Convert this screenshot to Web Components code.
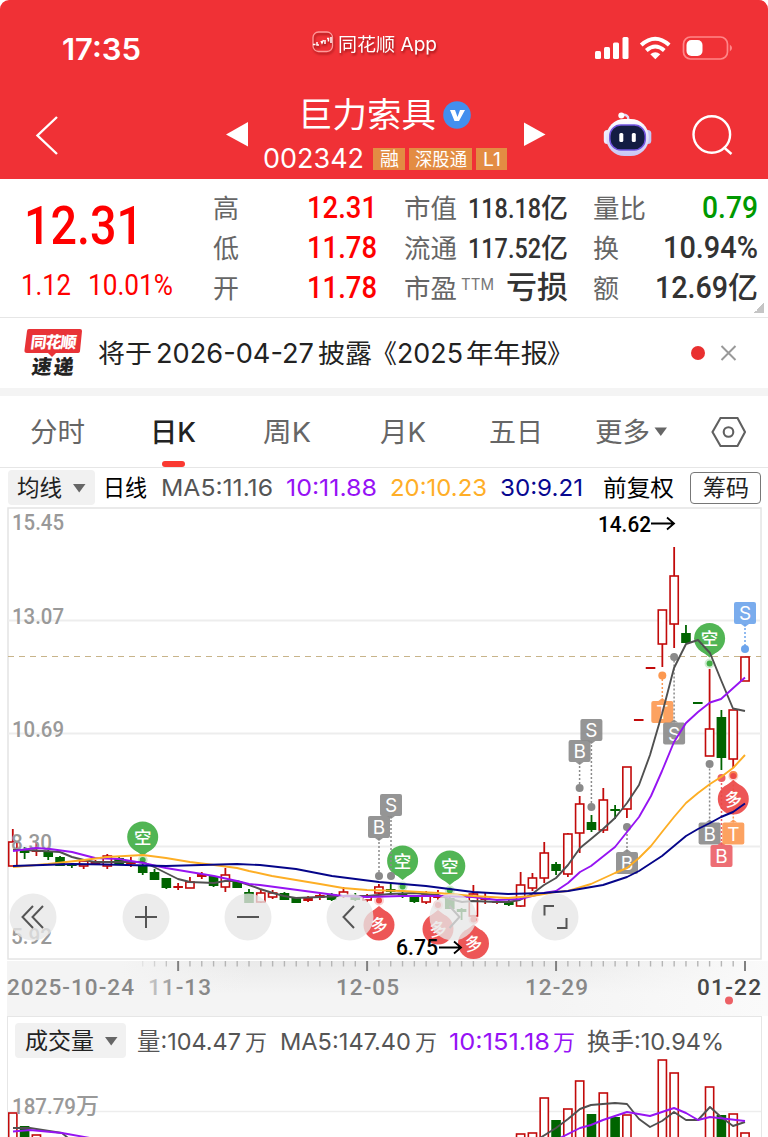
<!DOCTYPE html>
<html lang="zh-CN">
<head>
<meta charset="utf-8">
<title>巨力索具 002342</title>
<style>
    body {
        margin: 0;
        background: #fff;
        font-family: Inter, "Noto Sans CJK SC", sans-serif;
        overflow: hidden;
    }
</style>
</head>
<body>
<stock-page></stock-page>

<script>
// one line of text fitted to a width, the bottom of its box is the baseline
class FitText extends HTMLElement {
    constructor() {
        super();
        this.attachShadow({ mode: 'open' });
    }

    connectedCallback() {
        const w = this.getAttribute('w');
        const size = this.getAttribute('size') || 26;
        const h = Math.round(size * 0.73);
        const family = this.hasAttribute('din') ? "Roboto, 'Noto Sans CJK SC', sans-serif" : "Inter, 'Noto Sans CJK SC', sans-serif";
        this.shadowRoot.innerHTML = `
<style>
    :host { display: block; flex: none; width: ${w}px; height: ${h}px; }
    svg { display: block; overflow: visible; }
    text { fill: currentColor; }
</style>
<svg width="${w}" height="${h}"><text x="0" y="${h}" font-family="${family}" font-size="${size}" font-weight="${this.getAttribute('weight') || 400}" textLength="${w}" lengthAdjust="spacingAndGlyphs">${this.textContent}</text></svg>`;
    }
}
customElements.define('fit-text', FitText);

class StatusBar extends HTMLElement {
    constructor() {
        super();
        this.attachShadow({ mode: 'open' }).innerHTML = `
<style>
    :host { display: flex; height: 60px; align-items: flex-end; color: #fff; }
    .time { margin-left: 62px; }
    .app { display: flex; align-items: flex-end; margin: 0 0 9px 171px; filter: drop-shadow(1px 2px 1px rgba(90,0,0,.55)); }
    .app svg { margin: 0 4px -2px 0; }
    .icons { margin-left: 157px; }
    svg { display: block; }
</style>
<fit-text class="time" w="79" size="30" weight="600">17:35</fit-text>
<div class="app">
    <svg width="22" height="22" fill="none"><rect x="1" y="1" width="19.500" height="19.500" rx="5.500" stroke="#ff9a9a" stroke-width="1.300"/><path d="M1 13.500h2.500M5 11v3h2M9 10l1 2 1.500-3M13 9v4M15 7.500h1.500v3M19 6v6" stroke="#fff" stroke-width="1.500"/></svg>
    <fit-text w="99" size="18.500">同花顺 App</fit-text>
</div>
<svg class="icons" width="140" height="25" fill="#fff">
    <rect x="1" y="16" width="6" height="8" rx="1.500"/><rect x="10" y="12" width="6" height="12" rx="1.500"/><rect x="19" y="7.500" width="6" height="16.500" rx="1.500"/><rect x="28.500" y="2" width="6" height="22" rx="1.500"/>
    <g fill="none" stroke="#fff" stroke-width="4"><path d="M47.200 10q14-12.500 28 0"/><path d="M52.300 15.500q9-8 18 0"/></g>
    <path d="M56.300 19.300q5-4 10 0l-5 5z"/>
    <rect x="89.500" y="2" width="44" height="22" rx="7" fill="none" stroke="#ff8688" stroke-width="1.700"/><rect x="92.500" y="5" width="16" height="16" rx="5"/><path d="M135.800 9.500q4.500 3.500 0 7z" fill="#ff8688"/>
</svg>`;
    }
}
customElements.define('status-bar', StatusBar);

class StockTag extends HTMLElement {
    constructor() {
        super();
        this.attachShadow({ mode: 'open' }).innerHTML = `
<style>
    :host { display: flex; height: 22px; align-items: flex-end; justify-content: center; background: #e38c43; color: #fff; }
    div { margin-bottom: 4px; }
</style>
<div><slot></slot></div>`;
    }
}
customElements.define('stock-tag', StockTag);

class NavBar extends HTMLElement {
    constructor() {
        super();
        this.attachShadow({ mode: 'open' }).innerHTML = `
<style>
    :host { display: flex; height: 119px; color: #fff; }
    svg { display: block; flex: none; }
    .mid { width: 275px; flex: none; }
    .title { display: flex; height: 67px; align-items: flex-end; padding-left: 49px; }
    .title svg { margin: 0 0 -2px 7px; }
    .code { display: flex; height: 43px; align-items: flex-end; padding-left: 14px; gap: 4px; }
    .num { margin: 0 5px 2px 0; }
</style>
<svg width="249" height="119"><path d="M57 57 37.500 75.500 57 94" fill="none" stroke="#fff" stroke-width="2.400"/><path d="M226 74.500 248 62v24.500z" fill="#fff"/></svg>
<div class="mid">
    <div class="title">
        <fit-text w="138" size="34">巨力索具</fit-text>
        <svg width="28" height="28"><circle cx="14" cy="14" r="13.800" fill="#438fee"/><path d="M7 9h5l2.500 7L17 9h5l-6 11h-4.500z" fill="#fff"/></svg>
    </div>
    <div class="code">
        <fit-text class="num" w="101" size="27">002342</fit-text>
        <stock-tag style="width:32px"><fit-text w="19" size="19">融</fit-text></stock-tag>
        <stock-tag style="width:63px"><fit-text w="52" size="18">深股通</fit-text></stock-tag>
        <stock-tag style="width:31px"><fit-text w="18" size="19">L1</fit-text></stock-tag>
    </div>
</div>
<svg width="244" height="119">
    <defs><linearGradient id="head" x2="0" y2="1"><stop stop-color="#fff"/><stop offset="1" stop-color="#c8c6f4"/></linearGradient></defs>
    <path d="M-1 62v24.500L21.500 74.500z" fill="#fff"/>
    <g transform="translate(-.7 0)">
        <path d="M105 59q0-5-7-4" fill="none" stroke="#e0dcf6" stroke-width="2.500"/><circle cx="98" cy="55.500" r="3" fill="#fff"/>
        <rect x="80.500" y="70" width="7" height="14" rx="3.500" fill="#eeecff"/><rect x="121" y="70" width="7" height="14" rx="3.500" fill="#c6c7f5"/>
        <rect x="83" y="59" width="42.500" height="37" rx="18" fill="url(#head)"/>
        <rect x="86.500" y="65" width="35.500" height="25" rx="11" fill="#131d42" stroke="#7355df" stroke-width="1.500"/>
        <rect x="96" y="73" width="4" height="9" rx="1.500" fill="#fff"/><rect x="108.500" y="73" width="4" height="9" rx="1.500" fill="#fff"/>
    </g>
    <g fill="none" stroke="#fff" stroke-width="2.400"><circle cx="187.800" cy="74.500" r="18.300"/><path d="m199.500 87 8 7"/></g>
</svg>`;
    }
}
customElements.define('nav-bar', NavBar);

class QuotePanel extends HTMLElement {
    constructor() {
        super();
        this.attachShadow({ mode: 'open' }).innerHTML = `
<style>
    :host { display: grid; grid-template-columns: 213px 164px 191px 190px; height: 138px; border-bottom: 1px solid #e6e6e6; color: #333; }
    .price { color: #f00; padding: 26px 0 0 24px; }
    .change { display: flex; gap: 17px; margin: 30px 0 0 -3px; }
    .col { display: flex; flex-direction: column; gap: 18px; padding-top: 17px; }
    .cap { padding-left: 27px; }
    .vol { padding-left: 25px; }
    .row { display: flex; height: 22px; align-items: flex-end; }
    .row > :last-child { margin-left: auto; }
    .k { color: #666; }
    .red { color: #f00; }
    .green { color: #090; }
    .val { display: flex; align-items: flex-end; }
    .ttm { color: #777; margin: 0 0 8px 4px; }
    .more { width: 10px; height: 10px; margin: -13px -6px 0 auto; background: linear-gradient(135deg, transparent 50%, #c5c5c5 50%); }
</style>
<div class="price">
    <fit-text din w="119" size="54" weight="550">12.31</fit-text>
    <div class="change"><fit-text din w="50" size="29" weight="450">1.12</fit-text><fit-text din w="85" size="29" weight="450">10.01%</fit-text></div>
</div>
<div class="col">
    <div class="row"><fit-text class="k" w="26">高</fit-text><fit-text class="red" din w="70" size="31" weight="500">12.31</fit-text></div>
    <div class="row"><fit-text class="k" w="26">低</fit-text><fit-text class="red" din w="70" size="31" weight="500">11.78</fit-text></div>
    <div class="row"><fit-text class="k" w="26">开</fit-text><fit-text class="red" din w="70" size="31" weight="500">11.78</fit-text></div>
</div>
<div class="col cap">
    <div class="row"><fit-text class="k" w="53">市值</fit-text><div class="val"><fit-text din w="73" size="27" weight="500">118.18</fit-text><fit-text w="27" size="27" weight="500">亿</fit-text></div></div>
    <div class="row"><fit-text class="k" w="53">流通</fit-text><div class="val"><fit-text din w="73" size="27" weight="500">117.52</fit-text><fit-text w="27" size="27" weight="500">亿</fit-text></div></div>
    <div class="row"><fit-text class="k" w="53">市盈</fit-text><fit-text class="ttm" w="33" size="16">TTM</fit-text><fit-text w="62" size="31" weight="500">亏损</fit-text></div>
</div>
<div class="col vol">
    <div class="row"><fit-text class="k" w="53">量比</fit-text><fit-text class="green" din w="56" size="31" weight="500">0.79</fit-text></div>
    <div class="row"><fit-text class="k" w="26">换</fit-text><fit-text din w="95" size="31" weight="500">10.94%</fit-text></div>
    <div class="row"><fit-text class="k" w="26">额</fit-text><div class="val"><fit-text din w="73" size="31" weight="500">12.69</fit-text><fit-text w="30" size="30" weight="500">亿</fit-text></div></div>
    <div class="more"></div>
</div>`;
    }
}
customElements.define('quote-panel', QuotePanel);

class NewsBar extends HTMLElement {
    constructor() {
        super();
        this.attachShadow({ mode: 'open' }).innerHTML = `
<style>
    :host { display: flex; height: 70px; border-bottom: 8px solid #f4f4f4; color: #222; }
    .text { display: flex; height: 45px; align-items: flex-end; width: 590px; }
    svg { display: block; flex: none; }
</style>
<svg width="98" height="70" font-family="'Noto Sans CJK SC', sans-serif" font-weight="900">
    <path d="M29 11h51q2 0 2 2l-2 20q0 2-3 2H56l-4 4-4-4H27q-3 0-2.500-3L27 13q0-2 2-2z" fill="#e83337"/>
    <text transform="translate(30 29.500) skewX(-7)" font-size="16" textLength="46" fill="#fff">同花顺</text>
    <text transform="translate(31 56) skewX(-7)" font-size="20" textLength="42" fill="#222">速递</text>
</svg>
<div class="text">
    <fit-text w="54" size="26">将于</fit-text>
    <fit-text w="158" size="27" style="margin-left:4px">2026-04-27</fit-text>
    <fit-text w="54" size="26" style="margin-left:4px">披露</fit-text>
    <fit-text w="26" size="26" style="margin-left:-1px">《</fit-text>
    <fit-text w="66" size="27">2025</fit-text>
    <fit-text w="82" size="26" style="margin-left:3px">年年报</fit-text>
    <fit-text w="26" size="26" style="margin-left:-1px">》</fit-text>
</div>
<svg width="80" height="70"><circle cx="10" cy="35" r="7" fill="#e93030"/><path d="m33.500 28 14 14m0-14-14 14" stroke="#999" stroke-width="2"/></svg>`;
    }
}
customElements.define('news-bar', NewsBar);

class PeriodTabs extends HTMLElement {
    constructor() {
        super();
        this.attachShadow({ mode: 'open' }).innerHTML = `
<style>
    :host { display: flex; height: 71px; border-bottom: 1px solid #e6e6e6; color: #666; }
    .tab { display: flex; height: 46px; align-items: flex-end; }
    .tab.on { flex-direction: column; height: 71px; justify-content: flex-end; align-items: center; color: #222; }
    .tab.on i { width: 23px; height: 6px; border-radius: 3px; background: #fa3931; margin-top: 19px; }
    svg { display: block; }
</style>
<div class="tab" style="margin-left:30px"><fit-text w="55" size="27">分时</fit-text></div>
<div class="tab on" style="margin-left:65px"><fit-text w="46" size="27" weight="550">日K</fit-text><i></i></div>
<div class="tab" style="margin-left:67px"><fit-text w="48" size="27">周K</fit-text></div>
<div class="tab" style="margin-left:69px"><fit-text w="46" size="27">月K</fit-text></div>
<div class="tab" style="margin-left:63px"><fit-text w="54" size="27">五日</fit-text></div>
<div class="tab" style="margin-left:52px"><fit-text w="55" size="27">更多</fit-text></div>
<svg width="108" height="70"><path d="M4.500 31.500h12.500l-6.200 8.500z" fill="#666"/><g fill="none" stroke="#606060" stroke-width="2.100"><path d="M70.500 22h17l7.500 14-7.500 14h-17l-8-14z"/><circle cx="78.500" cy="36" r="4.800"/></g></svg>`;
    }
}
customElements.define('period-tabs', PeriodTabs);

class DropChip extends HTMLElement {
    constructor() {
        super();
        this.attachShadow({ mode: 'open' }).innerHTML = `
<style>
    :host { display: flex; height: 35px; box-sizing: border-box; border-radius: 4px; background: #f1f1f1; color: #222; justify-content: space-between; padding: 0 9px; }
    svg { display: block; margin-top: 14px; }
    div { display: flex; height: 26px; align-items: flex-end; }
</style>
<div><slot></slot></div><svg width="13" height="9"><path d="M0 0h12.500L6.200 8.500z" fill="#666"/></svg>`;
    }
}
customElements.define('drop-chip', DropChip);

class MaBar extends HTMLElement {
    constructor() {
        super();
        this.attachShadow({ mode: 'open' }).innerHTML = `
<style>
    :host { display: flex; height: 39px; color: #000; }
    drop-chip { width: 87px; margin: 2px 0 0 8px; }
    .line { display: flex; height: 28px; align-items: flex-end; }
    .btn { display: flex; box-sizing: border-box; width: 71px; height: 32px; margin: 4px 0 0 16px; padding-bottom: 7px; border: 1px solid #777; border-radius: 4px; align-items: flex-end; justify-content: center; color: #222; }
</style>
<drop-chip><fit-text w="45" size="22.500">均线</fit-text></drop-chip>
<div class="line">
    <fit-text w="44" size="22.500" style="margin-left:8px">日线</fit-text>
    <fit-text w="112" size="23.500" style="margin-left:14px;color:#555">MA5:11.16</fit-text>
    <fit-text w="91" size="23.500" style="margin-left:13px;color:#9612f5">10:11.88</fit-text>
    <fit-text w="97" size="23.500" style="margin-left:13px;color:#ffae27">20:10.23</fit-text>
    <fit-text w="83" size="23.500" style="margin-left:13px;color:#080890">30:9.21</fit-text>
    <fit-text w="71" size="23" style="margin-left:20px">前复权</fit-text>
</div>
<div class="btn"><fit-text w="46" size="23">筹码</fit-text></div>`;
    }
}
customElements.define('ma-bar', MaBar);

const STEP = 11.81;
const RED = '#c20a0a';
const GREEN = '#006400';
const cx = i => 12.8 + STEP * i;

const poly = (points, color) => `<polyline points="${points}" fill="none" stroke="${color}" stroke-width="1.900" stroke-linejoin="round"/>`;

// index, kind (r rise, g fall), body top, body bottom, wick top, wick bottom
const candles = `0r 842 866 829 866,1g 851 853 847 859,2r 850 852 842 856,3g 851 857 850 860,4g 857 866 856 866,5g 864 866 863 868,
6r 861 866 859 869,7r 862 864 860 865,8r 856 866 854 869,9g 858 864 857 865,10r 861 864 857 867,11g 866 873 862 875,12g 872 880 869 880,
13g 878 888 878 889,14r 886 887 883 890,15r 882 888 877 888,16r 874 877 872 879,17g 876 886 876 887,18r 875 887 868 892,19g 881 888 880 888,
20g 892 903 889 903,21r 893 902 890 903,22r 893 897 890 899,23g 893 900 892 900,24g 898 903 897 903,25r 898 901 896 902,26r 895 898 893 900,
27g 894 900 893 901,28r 892 896 887 898,29g 895 900 893 901,30r 896 900 894 902,31r 887 893 884 895,32g 889 892 884 895,33g 893 895 892 898,
34g 895 902 895 903,35r 895 902 891 904,36r 895 898 890 900,37g 898 909 897 909,38g 909 912 908 920,39r 894 916 885 916,40r 898 900 893 904,
41r 901 903 899 904,42g 902 905 900 906,43r 885 906 872 907,44r 878 888 873 891,45r 853 878 842 883,46g 864 871 862 875,47r 834 874 833 877,
48r 804 833 796 853,49g 822 830 815 832,50r 800 830 788 833,51g 809 811 805 819,52r 767 809 767 818,53r 719 719 719 719,54r 667 667 667 667,
55r 610 644 610 667,56r 576 624 547 648,57g 633 643 625 643,58g 702 702 702 702,59r 729 756 669 756,60g 717 758 710 770,61r 710 759 710 768,62r 657 681 657 681`;

function candle(row) {
    const [id, top, bottom, high, low] = row.trim().split(' ');
    const x = cx(parseInt(id));
    const color = id.endsWith('r') ? RED : GREEN;
    const y = Number(top), h = bottom - top;
    let body = `<rect x="${x - 4.8}" y="${y}" width="9.600" height="${Math.max(h, 2)}" fill="${color}"/>`;
    if (id.endsWith('r') && h > 3) {
        body = `<rect x="${x - 4.1}" y="${y}" width="8.200" height="${h}" fill="#fff" stroke="${color}" stroke-width="1.600"/>`;
    }
    return `<path d="M${x} ${high}V${low}" stroke="${color}" stroke-width="1.800"/>${body}`;
}

// letter tag tied by a dotted line to its dot
function tag(letter, x, y, dotY, color) {
    const down = dotY > y;
    const edge = down ? y + 11 : y - 11;
    return `<path d="M${x} ${edge}V${dotY}" stroke="${color}" stroke-width="1.500" stroke-dasharray="2 2"/>
<circle cx="${x}" cy="${dotY}" r="4" fill="${color}"/>
<g opacity=".9"><rect x="${x - 11}" y="${y - 11}" width="22" height="22" rx="2" fill="${color}"/><path d="M${x - 4} ${edge}l4 ${down ? 3 : -3} 4 ${down ? -3 : 3}z" fill="${color}"/></g>
<text x="${x}" y="${y + 7}" font-size="19" text-anchor="middle" fill="#fff">${letter}</text>`;
}

function pin(kind, x, y, dotY) {
    const bear = kind == '空';
    const color = bear ? '#43af46' : '#ec4848';
    const tail = bear ? `M${x - 9} ${y + 12}L${x} ${y + 19}L${x + 9} ${y + 12}z` : `M${x - 9} ${y - 12}L${x} ${y - 19}L${x + 9} ${y - 12}z`;
    return `<circle cx="${x}" cy="${dotY}" r="5" fill="${color}" opacity=".25"/><circle cx="${x}" cy="${dotY}" r="3" fill="${color}"/>
<g fill="${color}" opacity=".92"><circle cx="${x}" cy="${y}" r="15.500"/><path d="${tail}"/></g>
<text x="${x}" y="${y + 6.5}" font-size="17.500" font-weight="500" text-anchor="middle" fill="#fff"${bear ? '' : ` transform="rotate(-8 ${x} ${y})"`}>${kind}</text>`;
}

const price = (x, y, w, text, color, adjust = 'spacingAndGlyphs') => `<text x="${x}" y="${y}" font-family="Roboto, 'Noto Sans CJK SC', sans-serif" font-weight="500" font-size="22.500" fill="${color}" textLength="${w}" lengthAdjust="${adjust}">${text}</text>`;
const day = (x, w, text, color) => price(x, 34, w, text, color, 'spacing');

class KlineChart extends HTMLElement {
    constructor() {
        super();
        this.attachShadow({ mode: 'open' });
    }

    connectedCallback() {
        const grid = [620.5, 733.5, 846.5].map(y => `<path d="M8 ${y}h753" stroke="#ededed" stroke-width="2"/>`).join('');
        const grey = '#8a8a8a', orange = '#fc9850', blue = '#6ca4ec';
        const circle = x => `<circle cx="${x}" cy="917" r="23.500" fill="#e7e7e7" opacity=".78"/>`;

        this.shadowRoot.innerHTML = `
<style>
    :host { display: block; height: 454px; }
    svg { display: block; overflow: visible; }
</style>
<svg width="768" height="454" viewBox="0 507 768 454" font-family="Inter, 'Noto Sans CJK SC', sans-serif">
    <rect x="8" y="508" width="753" height="451" fill="none" stroke="#e4e4e4" stroke-width="1.500"/>
    ${grid}
    <path d="M8 656.500h753" stroke="#c8b48a" stroke-width="1" stroke-dasharray="6 5"/>
    ${candles.split(',').map(candle).join('')}
    ${price(12, 530, 52, '15.45', '#999')}${price(12, 624, 52, '13.07', '#999')}${price(12, 737, 52, '10.69', '#999')}${price(11, 850, 41, '8.30', '#999')}${price(11, 944, 41, '5.92', '#999')}
    ${pin('空', 142.7, 837, 860)}${pin('空', 402.6, 861, 886.5)}${pin('空', 449.8, 866, 890.5)}${pin('空', 709.6, 638.5, 663.5)}
    ${pin('多', 379, 925, 900.5)}${pin('多', 438, 929, 905)}${pin('多', 473.5, 943.5, 919.5)}
    ${tag('S', 391, 805, 876, grey)}${tag('B', 379, 827, 876, grey)}
    ${tag('S', 591.4, 730, 807, grey)}${tag('B', 579.6, 751, 788, grey)}${tag('B', 627, 863, 827, grey)}
    ${tag('T', 662.3, 712, 675.5, orange)}${tag('S', 674.1, 733.5, 657, grey)}${tag('S', 745, 613, 649, blue)}
    ${tag('B', 709.6, 833.5, 764, grey)}${tag('B', 721.5, 856, 778, '#ec5f65')}${tag('T', 733.3, 833.5, 775, orange)}
    ${pin('多', 733.3, 799, 776)}
    ${poly('13,850 25,850 60,852 72,857 84,860 95,862 143,862 154,867 166,873 178,879 190,882 214,883 225,881 237,881 249,885 260,889 273,893 284,896 296,898 320,897 340,896 367,896 390,894 414,893 438,895 450,899 462,902 473,901 497,902 508,902 520,900 532,894 544,885 556,878 568,865 580,848 591,839 603,829 615,818 627,803 639,785 650,755 662,714 674,668 686,644 698,640 710,653 721,680 733,708.5 745,711', '#505050')}
    ${poly('13,851 36,848 50,849 72,852 95,858 119,859 143,863 166,868 190,872 214,876 237,881 249,884 260,885 290,889 320,893 343,896 367,897 402,896 438,896 473,897 497,900 520,899 544,893 556,891 568,883 580,872 591,866 615,847 627,832 639,817 651,796 662,771 674,742 686,723 698,712 710,702.5 721,699 745,677.5', '#9614f2')}
    ${poly('13,867 48,864 84,860 107,857 143,855 166,858 190,862 214,865 237,868 249,871 272,876 296,880 320,884 343,888 367,890 402,891 438,893 473,896 508,898 532,896 556,892 568,891 591,884 615,873 627,868 639,858 651,846 662,832 674,817 686,803 698,793 710,784 721,777 733,768 745,755', '#fdae25')}
    ${poly('13,866 72,864 107,864.5 166,866 237,864 260,865 296,869 332,876 379,882 426,886 473,892 508,894 544,893 568,891 603,885 627,877 639,871 662,856 686,836 698,829 710,823 721,817 733,812 745,803.5', '#050589')}
    ${price(598, 532, 53, '14.62', '#000')}${price(396, 955, 42, '6.75', '#000')}
    <path d="M651 523.500h23m-7-6 7 6-7 6M439 947.500h22m-7-6 7 6-7 6" fill="none" stroke="#000" stroke-width="1.800"/>
    ${[33, 146, 248, 350, 453, 555].map(circle).join('')}
    <g fill="none" stroke="#555" stroke-width="2">
        <path d="m33 906-10.500 11 10.500 11M43 906l-10.500 11L43 928M135 917h22M146 906v22M237 917h22M354 906l-10.500 11 10.500 11"/>
        <path d="M544.500 915.500v-9.500h9.500M557 928h9.500v-10"/>
        <path d="m449.500 906 10 11-10 11" stroke="#c4c4c4"/>
    </g>
</svg>`;
    }
}
customElements.define('kline-chart', KlineChart);

class DateAxis extends HTMLElement {
    constructor() {
        super();
        this.attachShadow({ mode: 'open' });
    }

    connectedCallback() {
        let ticks = '';
        for (let i = 11; i < 63; i++) {
            const major = (i - 14) % 16 == 0;
            ticks += `<path d="M${cx(i)} 0v${major ? 10 : 5.5}" stroke="${major ? '#808080' : '#b5b5b5'}" stroke-width="${major ? 2 : 1.4}" opacity="${Math.min(1, (i - 10) / 4)}"/>`;
        }
        this.shadowRoot.innerHTML = `
<style>
    :host { display: block; height: 55px; margin-left: 7px; background: linear-gradient(90deg, #f4f4f4 15%, rgba(244,244,244,0) 32%, rgba(250,250,250,0) 70%, #fafafa), linear-gradient(#eaeaea, #f4f4f4 60%); }
    svg { display: block; }
</style>
<svg width="761" height="55" viewBox="7 0 761 55">
    <defs><linearGradient id="fade" x1="148" x2="182" gradientUnits="userSpaceOnUse"><stop stop-color="#ccc"/><stop offset="1" stop-color="#888"/></linearGradient></defs>
    ${ticks}
    ${day(7, 127, '2025-10-24', '#888')}${day(148, 63, '11-13', 'url(#fade)')}${day(336, 63, '12-05', '#888')}${day(525, 63, '12-29', '#888')}${day(697, 64, '01-22', '#484848')}
    <circle cx="729" cy="39.500" r="4" fill="#ec6065"/>
</svg>`;
    }
}
customElements.define('date-axis', DateAxis);

class VolumePanel extends HTMLElement {
    constructor() {
        super();
        this.attachShadow({ mode: 'open' });
    }

    connectedCallback() {
        const bars = [[0, 1113], [1, 1126, 1], [2, 1135], [43, 1134], [44, 1133], [45, 1098], [46, 1120, 1], [47, 1109], [48, 1081], [49, 1114, 1], [50, 1093], [51, 1117, 1],
            [52, 1115], [55, 1060], [56, 1073], [59, 1087], [60, 1115, 1], [61, 1114], [62, 1133]];
        const drawn = bars.map(([i, y, fall]) => fall
            ? `<rect x="${cx(i) - 4.8}" y="${y}" width="9.600" height="40" fill="${GREEN}"/>`
            : `<rect x="${cx(i) - 4.1}" y="${y}" width="8.200" height="99" fill="#fff" stroke="${RED}" stroke-width="1.600"/>`).join('');

        this.shadowRoot.innerHTML = `
<style>
    :host { display: block; box-sizing: border-box; height: 121px; width: 755px; margin-left: 7px; border: 1.500px solid #e6e6e6; border-bottom: 0; overflow: hidden; }
    .head { display: flex; height: 43px; color: #555; }
    drop-chip { width: 111px; margin: 6px 0 0 7px; padding: 0 8px 0 10px; }
    .line { display: flex; height: 33px; align-items: flex-end; }
    svg { display: block; }
</style>
<div class="head">
    <drop-chip><fit-text w="69" size="23">成交量</fit-text></drop-chip>
    <div class="line">
        <fit-text w="104" size="23.500" style="margin-left:11px">量:104.47</fit-text>
        <fit-text w="22" size="22" style="margin-left:4px">万</fit-text>
        <fit-text w="131" size="23.500" style="margin-left:13px">MA5:147.40</fit-text>
        <fit-text w="22" size="22" style="margin-left:4px">万</fit-text>
        <fit-text w="101" size="23.500" style="margin-left:12px;color:#9612f5">10:151.18</fit-text>
        <fit-text w="22" size="22" style="margin-left:3px;color:#9612f5">万</fit-text>
        <fit-text w="137" size="23.500" style="margin-left:12px">换手:10.94%</fit-text>
    </div>
</div>
<svg width="753" height="77" viewBox="8 1060 753 77" style="overflow:visible">
    <path d="M8 1111.500h753" stroke="#ededed" stroke-width="1.500"/>
    ${drawn}
    ${price(12, 1114, 64, '187.79', '#999')}${price(76, 1114, 23, '万', '#999')}
    ${poly('13,1128 30,1128 62,1133 68,1138', '#505050')}
    ${poly('13,1131.500 30,1130 62,1133 90,1138', '#9614f2')}
    ${poly('540,1138 556,1128 568,1119 580,1109 591,1105 615,1103 627,1104 639,1119 650,1127 662,1121 674,1112 686,1120 698,1120 710,1107 721,1117 733,1126 745,1122', '#505050')}
    ${poly('560,1138 580,1128 591,1125 603,1120 627,1112 650,1116 674,1108 686,1113 698,1120 710,1117 745,1121', '#9614f2')}
</svg>`;
    }
}
customElements.define('volume-panel', VolumePanel);

class StockPage extends HTMLElement {
    constructor() {
        super();
        this.attachShadow({ mode: 'open' }).innerHTML = `
<style>
    :host { display: block; width: 768px; height: 1137px; overflow: hidden; }
    header { background: #f03136; border-radius: 9px 9px 0 0; }
</style>
<header>
    <status-bar></status-bar>
    <nav-bar></nav-bar>
</header>
<quote-panel></quote-panel>
<news-bar></news-bar>
<period-tabs></period-tabs>
<ma-bar></ma-bar>
<kline-chart></kline-chart>
<date-axis></date-axis>
<volume-panel></volume-panel>`;
    }
}
customElements.define('stock-page', StockPage);
</script>
</body>
</html>
